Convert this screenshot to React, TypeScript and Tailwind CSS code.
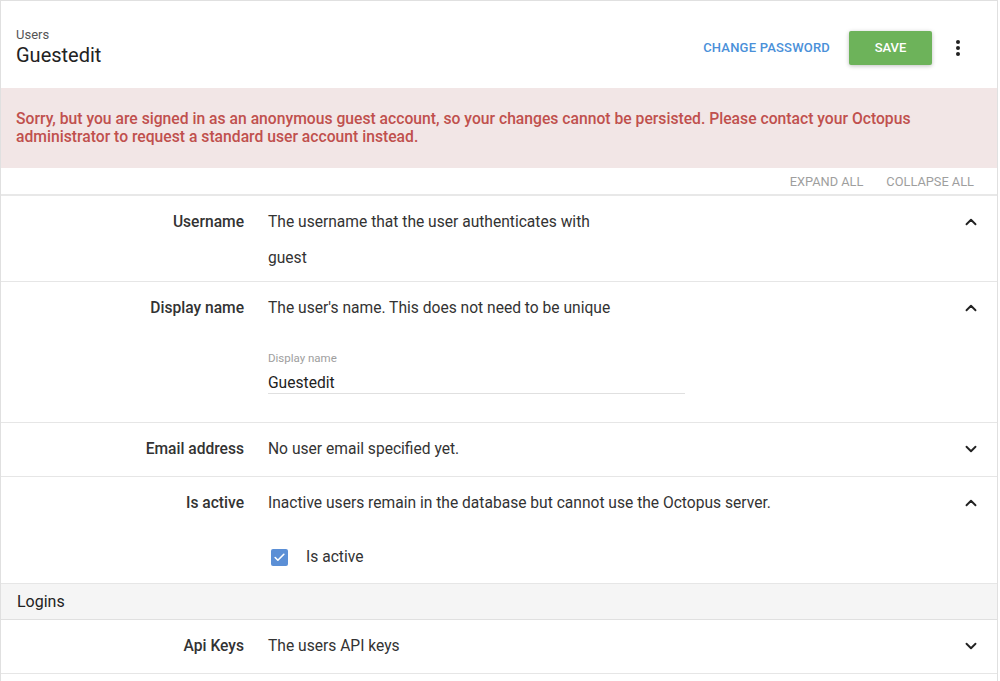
import { ChevronDown, ChevronUp, Check } from 'lucide-react'

const font = { fontFamily: 'Roboto, "Liberation Sans", sans-serif' }

function Row({
  label,
  desc,
  open,
  children,
  h,
}: {
  label: string
  desc: string
  open: boolean
  children?: React.ReactNode
  h: string
}) {
  return (
    <div className={`flex border-b border-[#e6e6e6] ${h}`}>
      <div className="w-[243px] shrink-0 pt-[17px] text-right text-[15.6px] font-medium leading-[18px] text-[#333]">{label}</div>
      <div className="flex-1 pl-[24px] pt-[17px]">
        <div className="text-[15.6px] leading-[18px] text-[#333]">{desc}</div>
        {children}
      </div>
      <div className="flex w-[52px] justify-center pt-[17px]">
        {open ? (
          <ChevronUp className="h-[18px] w-[18px] text-[#222]" strokeWidth={2.5} />
        ) : (
          <ChevronDown className="h-[18px] w-[18px] text-[#222]" strokeWidth={2.5} />
        )}
      </div>
    </div>
  )
}

export default function App() {
  return (
    <div className="h-[681px] overflow-hidden bg-white" style={font}>
      <div className="w-[998px] border-l border-t border-r border-[#e0e0e0] bg-white">
        {/* Header */}
        <div className="flex h-[87px] items-center justify-between pl-[15px] pr-[37px]">
          <div className="pt-[5px]">
            <div className="text-[13px] leading-[16px] text-[#555]">Users</div>
            <div className="text-[20px] leading-[24px] text-[#222]">Guestedit</div>
          </div>
          <div className="mt-[6px] flex items-center">
            <button className="text-[13px] font-medium tracking-[0.2px] text-[#4a90d9]">CHANGE PASSWORD</button>
            <button className="ml-[19px] h-[34px] w-[83px] rounded-[2px] bg-[#6db35a] text-[13px] font-medium text-white shadow-[0_1px_4px_rgba(0,0,0,0.25)]">
              SAVE
            </button>
            <div className="ml-[24px] flex flex-col items-center gap-[2px]">
              <span className="h-[4px] w-[4px] rounded-full bg-[#222]" />
              <span className="h-[4px] w-[4px] rounded-full bg-[#222]" />
              <span className="h-[4px] w-[4px] rounded-full bg-[#222]" />
            </div>
          </div>
        </div>

        {/* Banner */}
        <div className="h-[80px] bg-[#f2e6e6] px-[15px] pt-[22px] text-[15.7px] font-medium leading-[18px] text-[#c0504d]">
          Sorry, but you are signed in as an anonymous guest account, so your changes cannot be persisted. Please contact your Octopus administrator to request a standard user account instead.
        </div>

        {/* Expand / collapse */}
        <div className="flex h-[28px] items-center justify-end gap-[23px] border-b-2 border-[#e8e8e8] pr-[23px] pt-[1px] text-[12.8px] text-[#9e9e9e]">
          <span>EXPAND ALL</span>
          <span>COLLAPSE ALL</span>
        </div>

        <Row label="Username" desc="The username that the user authenticates with" open h="h-[86px]">
          <div className="mt-[16px] text-[15.6px] text-[#333]">guest</div>
        </Row>

        <Row label="Display name" desc="The user's name. This does not need to be unique" open h="h-[141px]">
          <div className="mt-[34px] w-[417px] border-b border-[#e0e0e0]">
            <div className="text-[11.5px] leading-[14px] text-[#9e9e9e]">Display name</div>
            <div className="mt-[8px] text-[15.6px] leading-[20px] text-[#222]">Guestedit</div>
          </div>
        </Row>

        <Row label="Email address" desc="No user email specified yet." open={false} h="h-[54px]" />

        <Row label="Is active" desc="Inactive users remain in the database but cannot use the Octopus server." open h="h-[107px]">
          <div className="mt-[34px] flex items-center pl-[3px]">
            <span className="flex h-[17px] w-[17px] items-center justify-center rounded-[2px] bg-[#5b8fd6]">
              <Check className="h-[13px] w-[13px] text-white" strokeWidth={3} />
            </span>
            <span className="ml-[18px] text-[15.6px] text-[#333]">Is active</span>
          </div>
        </Row>

        <div className="flex h-[36px] items-center border-b border-[#e0e0e0] bg-[#f5f5f5] pl-[16px] text-[16px] text-[#222]">
          Logins
        </div>

        <Row label="Api Keys" desc="The users API keys" open={false} h="h-[54px]" />
        <div className="h-[20px]" />
      </div>
    </div>
  )
}
